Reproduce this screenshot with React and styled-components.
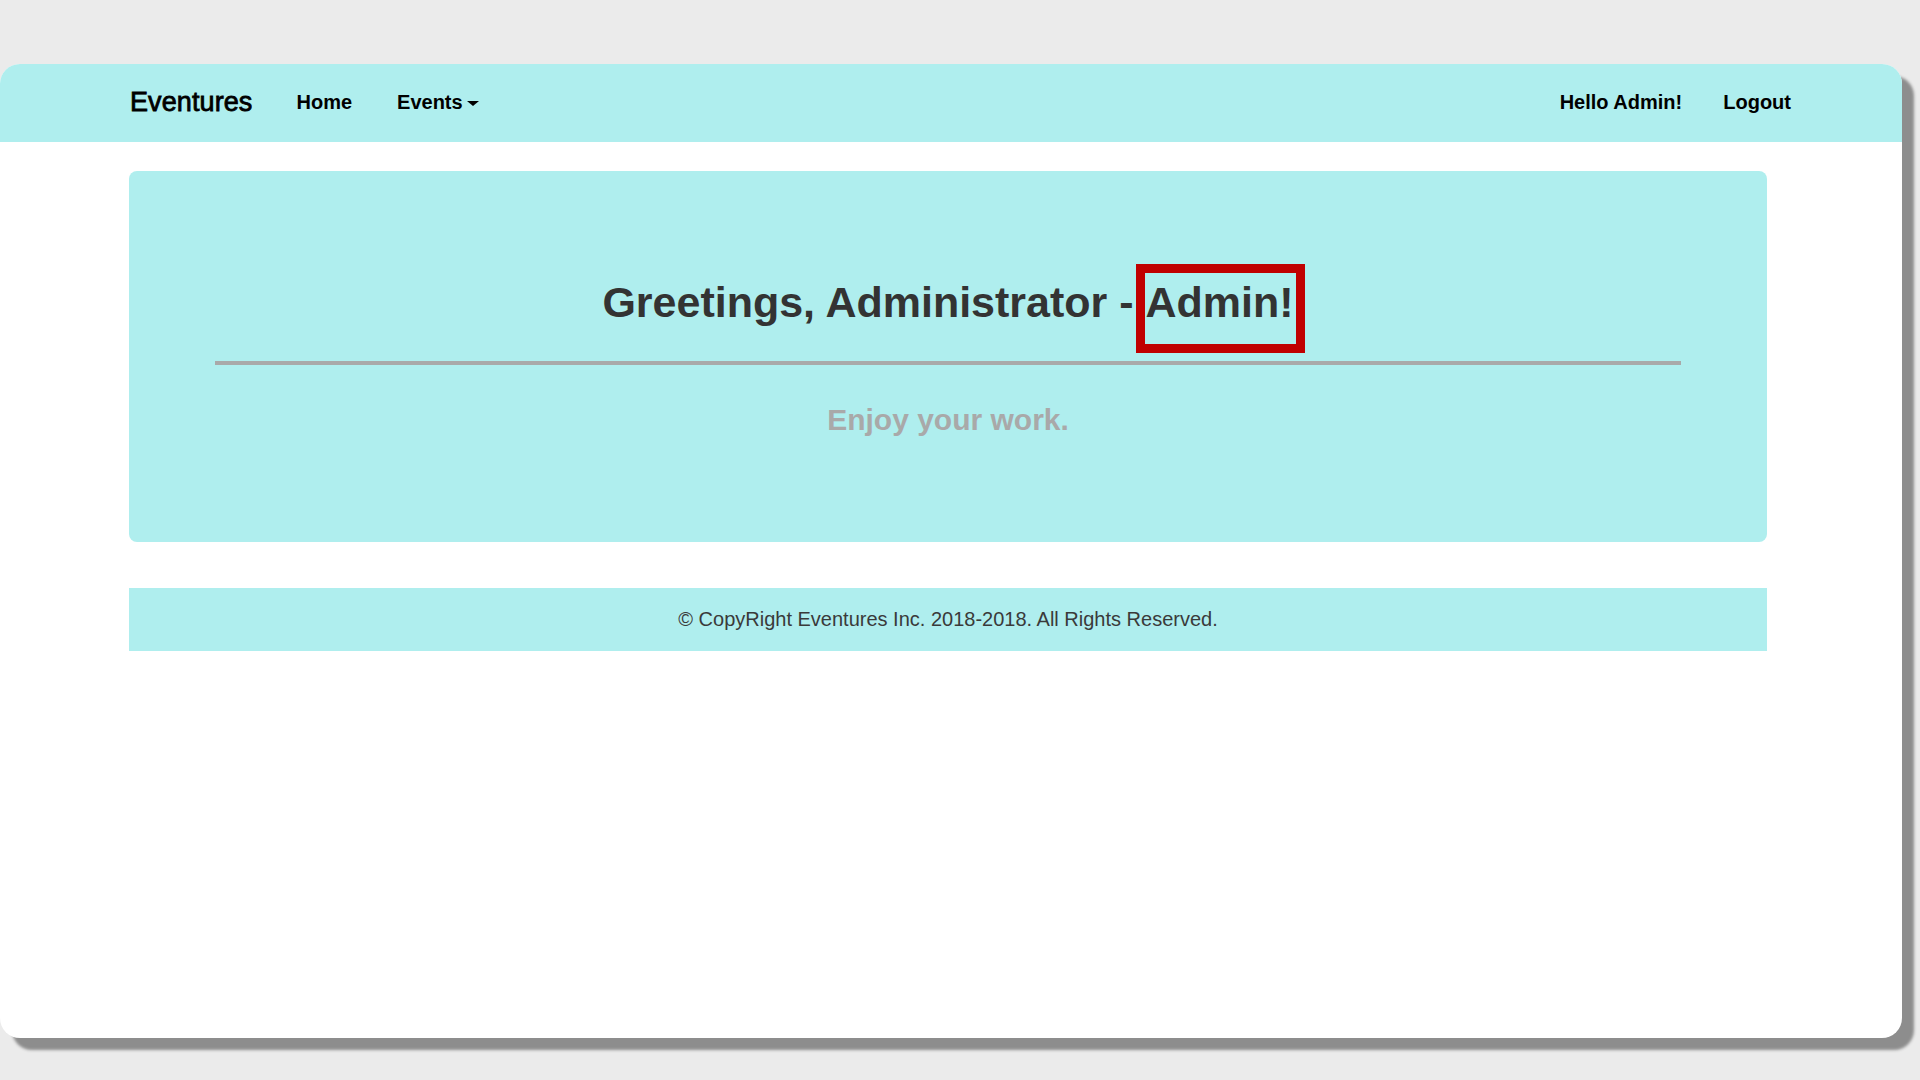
import React from "react";
import styled, { createGlobalStyle } from "styled-components";

const GlobalStyle = createGlobalStyle`
  html, body {
    margin: 0;
    padding: 0;
    background: #ebebeb;
  }
  body {
    font-family: "Liberation Sans", Arial, Helvetica, sans-serif;
  }
`;

const Stage = styled.div`
  width: 1920px;
  height: 1080px;
  padding-top: 64px;
  box-sizing: border-box;
  overflow: hidden;
`;

const Window = styled.div`
  width: 1902px;
  height: 974px;
  background: #ffffff;
  border-radius: 20px;
  box-shadow: 12px 12px 3px #8d8d8d;
  overflow: hidden;
  display: flex;
  flex-direction: column;
`;

const Navbar = styled.nav`
  height: 78px;
  background: #afeeee;
  display: flex;
  align-items: center;
  padding: 0 111px 2px 130px;
  box-sizing: border-box;
  color: #000;
  .brand {
    font-size: 27px;
    font-weight: normal;
    -webkit-text-stroke: 0.8px #000;
    letter-spacing: 0.1px;
    margin-right: 44px;
  }
`;

const NavList = styled.div`
  display: flex;
  align-items: center;
  gap: ${({ gap }) => gap}px;
  margin-left: ${({ right }) => (right ? "auto" : "0")};
`;

const NavLink = styled.span`
  font-size: 20px;
  font-weight: bold;
  display: inline-flex;
  align-items: center;
`;

const Caret = styled.span`
  display: inline-block;
  width: 0;
  height: 0;
  margin-left: 4px;
  margin-top: 2px;
  border-left: 6px solid transparent;
  border-right: 6px solid transparent;
  border-top: 5px solid #000;
`;

const Container = styled.main`
  width: 1638px;
  margin-left: 129px;
  padding-top: 29px;
`;

const Jumbotron = styled.section`
  height: 371px;
  box-sizing: border-box;
  background: #afeeee;
  border-radius: 8px;
  padding: 108px 86px 0;
  text-align: center;
  h1 {
    margin: 0;
    font-size: 43px;
    line-height: 47px;
    font-weight: bold;
    color: #333;
  }
  hr {
    margin: 35px 0 0;
    height: 4px;
    border: 0;
    background: #a9a9a9;
  }
  p {
    margin: 37px 0 0;
    font-size: 30px;
    line-height: 36px;
    font-weight: bold;
    color: #a9a9a9;
  }
`;

const Highlight = styled.span`
  position: relative;
  display: inline-block;
  &::after {
    content: "";
    position: absolute;
    top: -15px;
    bottom: -27px;
    left: -10px;
    right: -11px;
    border: 9px solid #c00000;
  }
`;

const Footer = styled.footer`
  margin-top: 46px;
  height: 63px;
  background: #afeeee;
  display: flex;
  align-items: center;
  justify-content: center;
  font-size: 20px;
  color: #3a3a3a;
`;

export default function App() {
  return (
    <>
      <GlobalStyle />
      <Stage>
        <Window>
          <Navbar>
            <span className="brand">Eventures</span>
            <NavList gap={45}>
              <NavLink>Home</NavLink>
              <NavLink>
                Events
                <Caret />
              </NavLink>
            </NavList>
            <NavList right gap={41}>
              <NavLink>Hello Admin!</NavLink>
              <NavLink>Logout</NavLink>
            </NavList>
          </Navbar>
          <Container>
            <Jumbotron>
              <h1>
                Greetings, Administrator - <Highlight>Admin!</Highlight>
              </h1>
              <hr />
              <p>Enjoy your work.</p>
            </Jumbotron>
            <Footer>© CopyRight Eventures Inc. 2018-2018. All Rights Reserved.</Footer>
          </Container>
        </Window>
      </Stage>
    </>
  );
}
